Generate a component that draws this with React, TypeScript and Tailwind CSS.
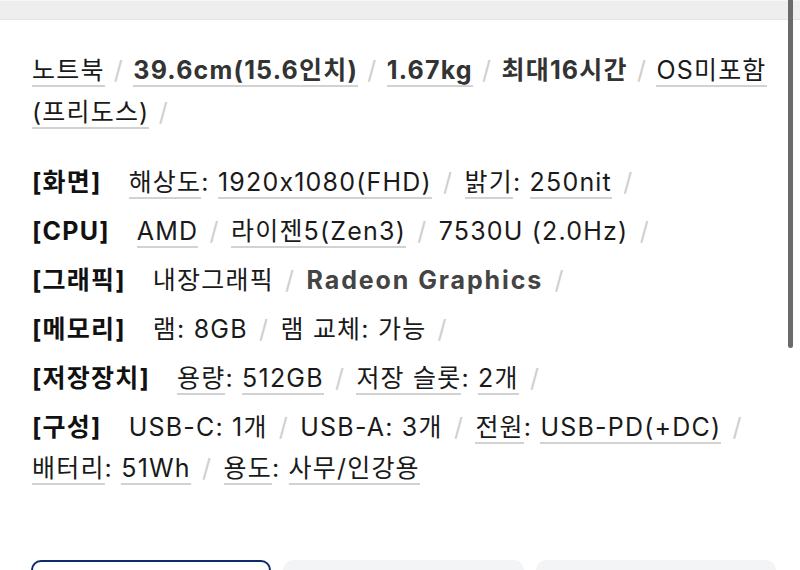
import React from "react";

const U = ({ children }: { children: React.ReactNode }) => (
  <span className="border-b-2 border-[#d2d2d2]">{children}</span>
);

const S = ({ tight }: { tight?: boolean }) => (
  <>
    {" "}
    <span className={tight ? "text-[#cfcfcf] mx-[1px]" : "text-[#cfcfcf] mx-[3px]"}>/</span>{" "}
  </>
);

const Label = ({ children }: { children: React.ReactNode }) => (
  <span className="font-bold text-[#111] mr-[27px]">{children}</span>
);

export default function App() {
  return (
    <div className="relative w-[800px] h-[570px] overflow-hidden bg-white text-[#1a1a1a]">
      <div className="h-[20px] bg-[#eeeeee] border-b border-[#e2e2e2] border-t border-t-[#f6f6f6]" />
      <div
        className="pl-[32px] pr-[20px] pt-[29px] text-[25px] tracking-[1.2px] break-keep"
        style={{ fontFamily: 'Inter, "Noto Sans CJK KR", sans-serif' }}
      >
        <p className="leading-[42px]">
          <U>노트북</U>
          <S tight />
          <span className="font-bold text-[#333]">
            <U>39.6cm(15.6인치)</U>
          </span>
          <S tight />
          <span className="font-bold text-[#333]">
            <U>1.67kg</U>
          </span>
          <S tight />
          <span className="font-bold text-[#333]">최대16시간</span>
          <S tight />
          <U>
            OS미포함
            <wbr />
            (프리도스)
          </U>
          <S tight />
        </p>
        <div className="mt-[29px] flex flex-col gap-[8px] leading-[41px]">
          <p>
            <Label>[화면]</Label>
            <U>해상도</U>: <U>1920x1080(FHD)</U>
            <S />
            <U>밝기</U>: <U>250nit</U>
            <S />
          </p>
          <p>
            <Label>[CPU]</Label>
            <U>AMD</U>
            <S />
            <U>라이젠5(Zen3)</U>
            <S />
            7530U (2.0Hz)
            <S />
          </p>
          <p>
            <Label>[그래픽]</Label>
            내장그래픽
            <S />
            <span className="font-bold text-[#444] tracking-[1.9px]">Radeon Graphics</span>
            <S />
          </p>
          <p>
            <Label>[메모리]</Label>
            램: 8GB
            <S />
            램 교체: 가능
            <S />
          </p>
          <p>
            <Label>[저장장치]</Label>
            <U>용량</U>: <U>512GB</U>
            <S />
            <U>저장 슬롯</U>: <U>2개</U>
            <S />
          </p>
          <p>
            <Label>[구성]</Label>
            USB-C: 1개
            <S />
            USB-A: 3개
            <S />
            <U>전원</U>: <U>USB-PD(+DC)</U>
            <S />
            <U>배터리</U>: <U>51Wh</U>
            <S />
            <U>용도</U>: <U>사무/인강용</U>
          </p>
        </div>
      </div>
      <div className="absolute left-0 right-0 top-[560px] pl-[31px] pr-[24px] grid grid-cols-3 gap-[12px]">
        <div className="h-[50px] rounded-[10px] border-2 border-[#0b2b6a] bg-white" />
        <div className="h-[50px] rounded-[10px] bg-[#f3f4f6]" />
        <div className="h-[50px] rounded-[10px] bg-[#f3f4f6]" />
      </div>
      <div className="absolute right-[7px] top-0 w-[5px] h-[348px] rounded-b-full bg-[#6a6a6a]" />
    </div>
  );
}
